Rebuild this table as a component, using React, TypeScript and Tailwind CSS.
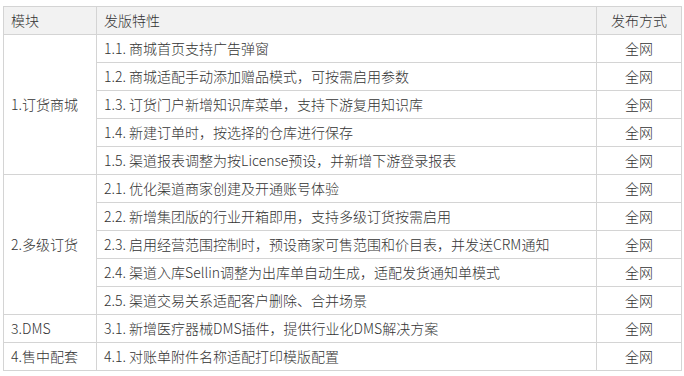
import React from 'react';

interface Group {
  module: string;
  items: string[];
}

const groups: Group[] = [
  {
    module: '1.订货商城',
    items: [
      '1.1. 商城首页支持广告弹窗',
      '1.2. 商城适配手动添加赠品模式，可按需启用参数',
      '1.3. 订货门户新增知识库菜单，支持下游复用知识库',
      '1.4. 新建订单时，按选择的仓库进行保存',
      '1.5. 渠道报表调整为按License预设，并新增下游登录报表',
    ],
  },
  {
    module: '2.多级订货',
    items: [
      '2.1. 优化渠道商家创建及开通账号体验',
      '2.2. 新增集团版的行业开箱即用，支持多级订货按需启用',
      '2.3. 启用经营范围控制时，预设商家可售范围和价目表，并发送CRM通知',
      '2.4. 渠道入库Sellin调整为出库单自动生成，适配发货通知单模式',
      '2.5. 渠道交易关系适配客户删除、合并场景',
    ],
  },
  { module: '3.DMS', items: ['3.1. 新增医疗器械DMS插件，提供行业化DMS解决方案'] },
  { module: '4.售中配套', items: ['4.1. 对账单附件名称适配打印模版配置'] },
];

const cell = 'border border-[#d4d4d4] h-[28px] px-[7px] py-0';

const App: React.FC = () => {
  return (
    <div
      className="w-[684px] h-[376px] bg-white pt-[6px] pl-[3px] text-[14px] font-light text-[#333333]"
      style={{ fontFamily: '"Noto Sans CJK SC", "Liberation Sans", sans-serif' }}
    >
      <table className="border-collapse w-[678px] table-fixed">
        <colgroup>
          <col className="w-[93px]" />
          <col className="w-[500px]" />
          <col className="w-[85px]" />
        </colgroup>
        <thead>
          <tr className="bg-[#f2f2f2]">
            <th className={`${cell} text-left font-light`}>模块</th>
            <th className={`${cell} text-left font-light`}>发版特性</th>
            <th className={`${cell} text-center font-light`}>发布方式</th>
          </tr>
        </thead>
        <tbody>
          {groups.map((g) =>
            g.items.map((item, i) => (
              <tr key={item}>
                {i === 0 && (
                  <td className={`${cell} align-middle`} rowSpan={g.items.length}>
                    {g.module}
                  </td>
                )}
                <td className={`${cell} whitespace-nowrap`}>{item}</td>
                <td className={`${cell} text-center`}>全网</td>
              </tr>
            ))
          )}
        </tbody>
      </table>
    </div>
  );
};

export default App;
